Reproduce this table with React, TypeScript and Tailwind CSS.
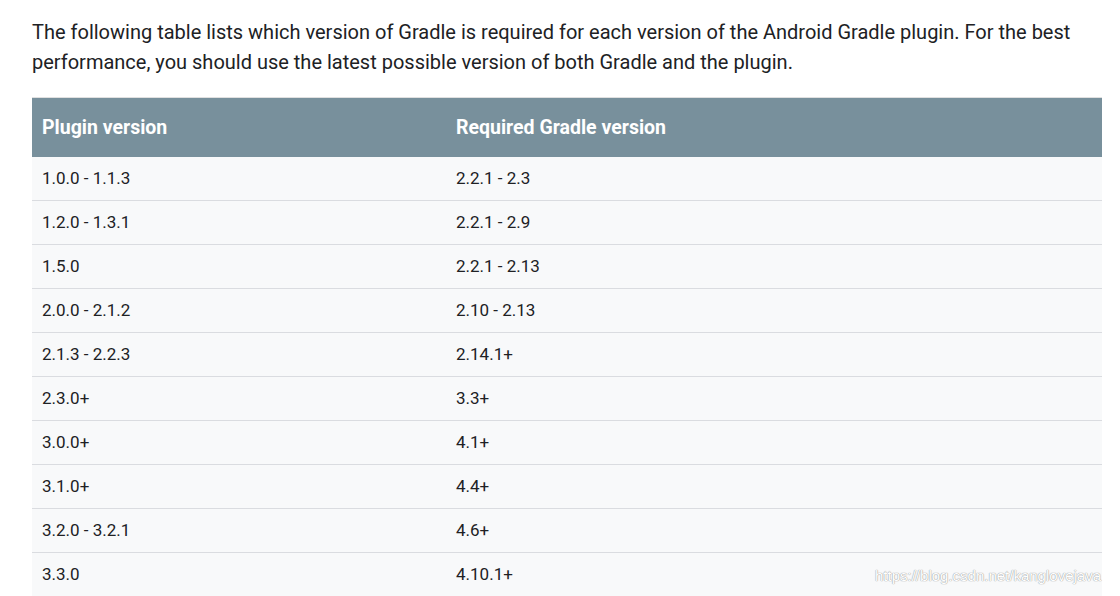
const rows: [string, string][] = [
  ["1.0.0 - 1.1.3", "2.2.1 - 2.3"],
  ["1.2.0 - 1.3.1", "2.2.1 - 2.9"],
  ["1.5.0", "2.2.1 - 2.13"],
  ["2.0.0 - 2.1.2", "2.10 - 2.13"],
  ["2.1.3 - 2.2.3", "2.14.1+"],
  ["2.3.0+", "3.3+"],
  ["3.0.0+", "4.1+"],
  ["3.1.0+", "4.4+"],
  ["3.2.0 - 3.2.1", "4.6+"],
  ["3.3.0", "4.10.1+"],
];

export default function App() {
  return (
    <main className="relative h-[596px] w-[1120px] overflow-hidden bg-white pl-8 pr-[18px] pt-[17px] font-['Roboto',sans-serif] text-[#202124]">
      <p className="text-[20px] leading-[30px]">
        The following table lists which version of Gradle is required for each version of the Android Gradle plugin. For the best performance, you should use the latest possible version of both Gradle and the plugin.
      </p>
      <table className="mt-[20px] w-full border-collapse border-t border-[#e0e0e0]">
        <thead>
          <tr className="h-[59px] bg-[#78909c] text-left text-[19.5px] text-white">
            <th className="w-[424px] px-[10px] font-bold">Plugin version</th>
            <th className="px-0 font-bold">Required Gradle version</th>
          </tr>
        </thead>
        <tbody>
          {rows.map(([plugin, gradle], i) => (
            <tr className={i === 0 ? "h-[44px] bg-[#f8f9fa] text-[17px]" : "h-[44px] border-t border-[#dadce0] bg-[#f8f9fa] text-[17px]"} key={plugin}>
              <td className="px-[10px]">{plugin}</td>
              <td>{gradle}</td>
            </tr>
          ))}
        </tbody>
      </table>
      <span className="absolute bottom-[9px] right-[19px] font-['Liberation_Sans',sans-serif] text-[15px] text-white [text-shadow:0_0_1px_#9a9a9a,0_0_1px_#9a9a9a]">
        https://blog.csdn.net/kanglovejava
      </span>
    </main>
  );
}
